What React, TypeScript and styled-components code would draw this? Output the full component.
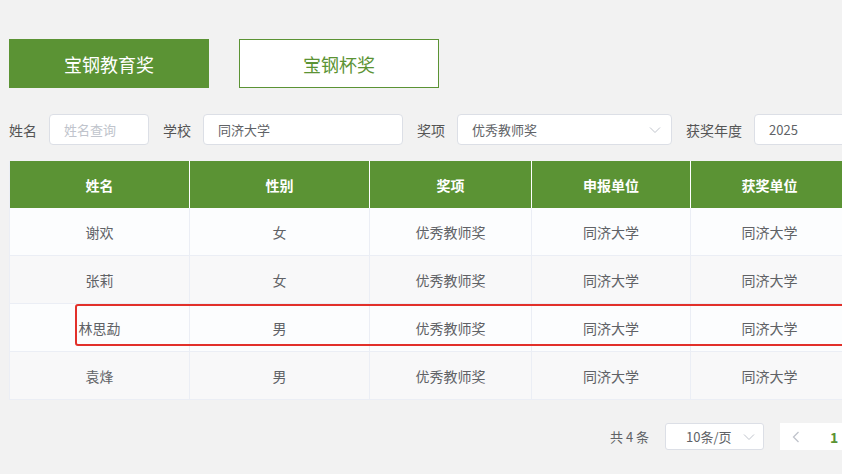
import React from "react";
import styled, { createGlobalStyle } from "styled-components";

const GREEN = "#5b9334";

const Global = createGlobalStyle`
  html, body { margin: 0; padding: 0; background: #f2f2f2; }
  body {
    width: 842px; height: 474px; overflow: hidden;
    font-family: "Noto Sans CJK SC", "Noto Sans", sans-serif;
    color: #606266;
  }
`;

const Page = styled.div`
  padding: 39px 0 0 9px;
  width: 900px;
  box-sizing: border-box;
`;

const Tabs = styled.div`
  display: flex;
  gap: 30px;
`;

const Tab = styled.div<{ $active?: boolean }>`
  width: 200px;
  height: 49px;
  box-sizing: border-box;
  display: flex;
  align-items: center;
  justify-content: center;
  font-size: 18px;
  background: ${(p) => (p.$active ? GREEN : "#fff")};
  color: ${(p) => (p.$active ? "#fff" : GREEN)};
  border: 1px solid ${GREEN};
`;

const Filters = styled.div`
  display: flex;
  align-items: center;
  margin-top: 26px;
  height: 31px;
`;

const Label = styled.span<{ $first?: boolean }>`
  font-size: 14px;
  color: #555;
  margin-left: ${(p) => (p.$first ? "0" : "14px")};
  margin-right: 12px;
  white-space: nowrap;
`;

const Field = styled.div<{ $w: number; $placeholder?: boolean }>`
  width: ${(p) => p.$w}px;
  height: 31px;
  box-sizing: border-box;
  background: #fff;
  border: 1px solid #dcdfe6;
  border-radius: 4px;
  display: flex;
  align-items: center;
  justify-content: space-between;
  padding: 0 10px 0 14px;
  font-size: 13px;
  color: ${(p) => (p.$placeholder ? "#c0c4cc" : "#606266")};
  flex-shrink: 0;
`;

const Chevron = () => (
  <svg width="12" height="8" viewBox="0 0 12 8">
    <path d="M1 1.5 L6 6.5 L11 1.5" fill="none" stroke="#c0c4cc" strokeWidth="1" />
  </svg>
);

const LeftChevron = () => (
  <svg width="8" height="12" viewBox="0 0 8 12">
    <path d="M6.5 1 L1.5 6 L6.5 11" fill="none" stroke="#c0c4cc" strokeWidth="1.3" />
  </svg>
);

const TableWrap = styled.div`
  position: relative;
  margin-top: 16px;
  width: 839px;
`;

const Grid = styled.div`
  display: grid;
  grid-template-columns: 180px 180px 162px 159px 158px;
  border-left: 1px solid #ebeef5;
`;

const HeadCell = styled.div`
  height: 47px;
  background: ${GREEN};
  color: #fff;
  font-weight: bold;
  font-size: 14px;
  display: flex;
  align-items: center;
  justify-content: center;
  border-right: 1px solid #fff;
`;

const Cell = styled.div<{ $alt?: boolean }>`
  height: 48px;
  box-sizing: border-box;
  background: ${(p) => (p.$alt ? "#f8f8f9" : "#fcfdfe")};
  border-right: 1px solid #ebeef5;
  border-bottom: 1px solid #ebeef5;
  font-size: 14px;
  color: #606266;
  display: flex;
  align-items: center;
  justify-content: center;
`;

const Highlight = styled.div`
  position: absolute;
  left: 66px;
  top: 143px;
  right: -20px;
  height: 42px;
  border: 2px solid #e2302a;
  border-radius: 3px;
  box-sizing: border-box;
  pointer-events: none;
`;

const Pager = styled.div`
  display: flex;
  align-items: center;
  margin-top: 23px;
  padding-left: 601px;
  font-size: 13px;
`;

const Total = styled.span`
  color: #606266;
  margin-right: 16px;
  white-space: pre;
`;

const SizeSelect = styled.div`
  width: 99px;
  height: 27px;
  box-sizing: border-box;
  background: #fff;
  border: 1px solid #dcdfe6;
  border-radius: 3px;
  display: flex;
  align-items: center;
  justify-content: space-between;
  padding: 0 8px 0 20px;
  color: #606266;
  flex-shrink: 0;
`;

const PageBox = styled.div`
  margin-left: 16px;
  height: 27px;
  width: 80px;
  background: #fff;
  display: flex;
  align-items: center;
  gap: 30px;
  padding-left: 12px;
  flex-shrink: 0;
`;

const Current = styled.span`
  color: ${GREEN};
  font-weight: bold;
  font-size: 14px;
`;

const heads = ["姓名", "性别", "奖项", "申报单位", "获奖单位"];
const rows = [
  ["谢欢", "女"],
  ["张莉", "女"],
  ["林思勐", "男"],
  ["袁烽", "男"],
];

export default function App() {
  return (
    <>
      <Global />
      <Page>
        <Tabs>
          <Tab $active>宝钢教育奖</Tab>
          <Tab>宝钢杯奖</Tab>
        </Tabs>
        <Filters>
          <Label $first>姓名</Label>
          <Field $w={100} $placeholder>姓名查询</Field>
          <Label>学校</Label>
          <Field $w={200}>同济大学</Field>
          <Label>奖项</Label>
          <Field $w={215}>
            优秀教师奖
            <Chevron />
          </Field>
          <Label>获奖年度</Label>
          <Field $w={120}>2025</Field>
        </Filters>
        <TableWrap>
          <Grid>
            {heads.map((h) => (
              <HeadCell key={h}>{h}</HeadCell>
            ))}
            {rows.map((r, i) => (
              <React.Fragment key={r[0]}>
                <Cell $alt={i % 2 === 1}>{r[0]}</Cell>
                <Cell $alt={i % 2 === 1}>{r[1]}</Cell>
                <Cell $alt={i % 2 === 1}>优秀教师奖</Cell>
                <Cell $alt={i % 2 === 1}>同济大学</Cell>
                <Cell $alt={i % 2 === 1}>同济大学</Cell>
              </React.Fragment>
            ))}
          </Grid>
          <Highlight />
        </TableWrap>
        <Pager>
          <Total>共 4 条</Total>
          <SizeSelect>
            10条/页
            <Chevron />
          </SizeSelect>
          <PageBox>
            <LeftChevron />
            <Current>1</Current>
          </PageBox>
        </Pager>
      </Page>
    </>
  );
}
